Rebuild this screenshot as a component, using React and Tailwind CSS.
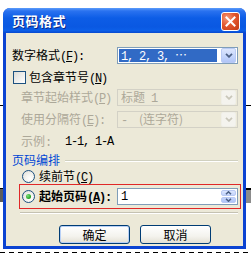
function Chevron({ color }) {
  return (
    <svg width="8" height="5" viewBox="0 0 8 5">
      <path d="M1 0.8 L4 3.8 L7 0.8" fill="none" stroke={color} strokeWidth="1.8" />
    </svg>
  );
}

function DropBtn({ disabled }) {
  return (
    <div
      className={`w-[15px] h-full mr-px flex items-center justify-center rounded-[2px] border ${
        disabled
          ? 'border-[#F0EFE8] bg-[#F4F3EE]'
          : 'border-[#B9CAF4] bg-[linear-gradient(180deg,#DCE6FD_0%,#C3D4FB_60%,#B1C5F7_100%)]'
      }`}
    >
      <Chevron color={disabled ? '#C9C7BA' : '#4D6185'} />
    </div>
  );
}

function Combo({ children, disabled, selected }) {
  return (
    <div
      className={`w-[121px] h-[17px] border flex items-stretch ${
        disabled ? 'border-[#D3D1C6] bg-[#ECE9D8]' : 'border-[#7F9DB9] bg-white'
      }`}
    >
      <div
        className={`flex-1 ml-px my-px mr-[4px] flex items-center pl-[2px] whitespace-pre ${
          selected ? 'bg-[#316AC5] text-white' : ''
        } ${disabled ? 'text-[#ACA899]' : ''}`}
      >
        <span>{children}</span>
      </div>
      <DropBtn disabled={disabled} />
    </div>
  );
}

function Radio({ checked }) {
  return (
    <div className="w-[13px] h-[13px] rounded-full border border-[#1C5180] bg-[radial-gradient(circle_at_65%_70%,#FFFFFF_0%,#F4F4F0_40%,#DCDCD6_100%)] flex items-center justify-center shrink-0">
      {checked && (
        <div className="w-[5px] h-[5px] rounded-full bg-[radial-gradient(circle_at_35%_35%,#7BE07B_0%,#21A121_70%,#168C16_100%)]" />
      )}
    </div>
  );
}

/* half-width latin, SimSun-like 6px cells */
function L({ children, className = '' }) {
  return (
    <span className={`font-['Liberation_Mono',monospace] tracking-[-1.2px] whitespace-pre ${className}`}>{children}</span>
  );
}

function U({ children }) {
  return <span className="underline underline-offset-[1px]">{children}</span>;
}

export default function App() {
  return (
    <div className="relative w-[251px] h-[259px] bg-white overflow-hidden font-['Noto_Sans_CJK_SC','Noto_Sans',sans-serif] text-[12px] leading-none text-black">
      {/* document bits behind the dialog */}
      <div className="absolute left-0 top-[105px] w-[5px] h-px bg-black" />
      <div className="absolute left-[244px] top-[105px] w-[7px] h-px bg-black" />
      <div className="absolute left-0 top-[188px] w-[5px] h-[14px] bg-[#5C5C5C] border-t border-black" />
      <div className="absolute left-[243px] top-[188px] w-[8px] h-[15px] bg-[#8C8C8C] border-t-2 border-black" />

      <div className="relative ml-[3px] mt-[8px] w-[243px] h-[241px] flex flex-col rounded-t-[7px] bg-[#0B43D2] overflow-hidden">
        {/* title bar */}
        <div className="h-[25px] shrink-0 flex items-center justify-between pl-[9px] pr-[6px] bg-[linear-gradient(180deg,#5C9CFA_0%,#2A72F0_12%,#0D5DE6_40%,#0A58E2_75%,#0C5FE8_90%,#0849CF_100%)]">
          <span className="text-white font-bold text-[13px] tracking-[0.5px] [text-shadow:1px_1px_0_#0A2A8A]">
            页码格式
          </span>
          <div className="w-[19px] h-[19px] mt-[2px] rounded-[3px] border border-white bg-[radial-gradient(circle_at_30%_30%,#F59A7C_0%,#E2572E_45%,#C23A14_100%)] flex items-center justify-center">
            <svg width="11" height="11" viewBox="0 0 11 11">
              <path d="M1.5 1.5 L9.5 9.5 M9.5 1.5 L1.5 9.5" stroke="white" strokeWidth="2" strokeLinecap="square" />
            </svg>
          </div>
        </div>

        {/* body */}
        <div className="flex-1 mx-[3px] mb-[3px] bg-[#ECE9D8] flex flex-col">
          {/* row 1 */}
          <div className="mt-[14px] h-[17px] flex items-center">
            <div className="w-[111px] pl-[6px] whitespace-nowrap">
              数字格式<L>(<U>F</U>):</L>
            </div>
            <Combo selected>
              <L>1, 2, 3, </L>…
            </Combo>
          </div>

          {/* row 2 checkbox */}
          <div className="mt-[7px] h-[13px] flex items-center">
            <div className="ml-[7px] w-[13px] h-[13px] border border-[#1C5180] bg-[linear-gradient(135deg,#DCDCD7_0%,#FFFFFF_100%)]" />
            <div className="ml-[3px] whitespace-nowrap">
              包含章节号<L>(<U>N</U>)</L>
            </div>
          </div>

          {/* row 3 */}
          <div className="mt-[5px] h-[17px] flex items-center">
            <div className="w-[111px] pl-[15px] whitespace-nowrap text-[#ACA899]">
              章节起始样式<L>(<U>P</U>)</L>
            </div>
            <Combo disabled>
              标题<L> 1</L>
            </Combo>
          </div>

          {/* row 4 */}
          <div className="mt-[5px] h-[17px] flex items-center">
            <div className="w-[111px] pl-[15px] whitespace-nowrap text-[#ACA899]">
              使用分隔符<L>(<U>E</U>):</L>
            </div>
            <Combo disabled>
              <L>-</L>
              <span className="ml-[12px]">(连字符)</span>
            </Combo>
          </div>

          {/* row 5 */}
          <div className="mt-[7px] h-[14px] flex items-center pl-[15px] whitespace-nowrap">
            <span className="text-[#ACA899]">
              示例<L>:</L>
            </span>
            <L className="ml-[14px]">1-1, 1-A</L>
          </div>

          {/* row 6 group header */}
          <div className="mt-[4px] h-[14px] flex items-center pl-[6px] pr-[5px]">
            <span className="text-[#0046D5] whitespace-nowrap">页码编排</span>
            <div className="flex-1 ml-[5px] mt-[2px] h-[2px] border-t border-[#D0D0BF] border-b border-b-white" />
          </div>

          {/* row 7 */}
          <div className="mt-[3px] h-[13px] flex items-center pl-[16px]">
            <Radio />
            <div className="ml-[4px] whitespace-nowrap">
              续前节<L>(<U>C</U>)</L>
            </div>
          </div>

          {/* row 8 red box */}
          <div className="mt-px ml-[13px] w-[222px] h-[25px] border border-[#E02828] flex items-center">
            <div className="w-[97px] pl-[2px] flex items-center">
              <Radio checked />
              <div className="ml-[4px] whitespace-nowrap font-bold">
                起始页码<L>(<U>A</U>):</L>
              </div>
            </div>
            <div className="w-[121px] h-[17px] border border-[#7F9DB9] bg-white flex items-stretch">
              <div className="flex-1 pl-[3px] flex items-center">
                <L>1</L>
              </div>
              <div className="w-[15px] mr-px my-px flex flex-col gap-px">
                <div className="flex-1 rounded-[2px] border border-[#B9CAF4] bg-[linear-gradient(180deg,#DCE6FD_0%,#C3D4FB_100%)] flex items-center justify-center">
                  <svg width="7" height="4" viewBox="0 0 7 4">
                    <path d="M1 3.3 L3.5 0.8 L6 3.3" fill="none" stroke="#4D6185" strokeWidth="1.5" />
                  </svg>
                </div>
                <div className="flex-1 rounded-[2px] border border-[#B9CAF4] bg-[linear-gradient(180deg,#C3D4FB_0%,#B1C5F7_100%)] flex items-center justify-center">
                  <svg width="7" height="4" viewBox="0 0 7 4">
                    <path d="M1 0.7 L3.5 3.2 L6 0.7" fill="none" stroke="#4D6185" strokeWidth="1.5" />
                  </svg>
                </div>
              </div>
            </div>
          </div>

          {/* separator */}
          <div className="mt-[3px] ml-[14px] w-[218px] h-[2px] border-t border-[#C5C2B2] border-b border-b-white" />

          {/* buttons */}
          <div className="mt-[11px] ml-[53px] flex gap-[10px]">
            <div className="w-[71px] h-[19px] rounded-[3px] border border-[#003C74] bg-[linear-gradient(180deg,#FFFFFF_0%,#F4F3EE_60%,#E3E0D4_100%)] shadow-[inset_0_0_0_1px_#B8D0F6] flex items-center justify-center">
              确定
            </div>
            <div className="w-[71px] h-[19px] rounded-[3px] border border-[#003C74] bg-[linear-gradient(180deg,#FFFFFF_0%,#F4F3EE_60%,#E3E0D4_100%)] flex items-center justify-center">
              取消
            </div>
          </div>
        </div>
      </div>

      {/* dashed line */}
      <div className="mt-[3px] w-full h-px bg-[repeating-linear-gradient(90deg,#000_0_5px,transparent_5px_9px)]" />
    </div>
  );
}
